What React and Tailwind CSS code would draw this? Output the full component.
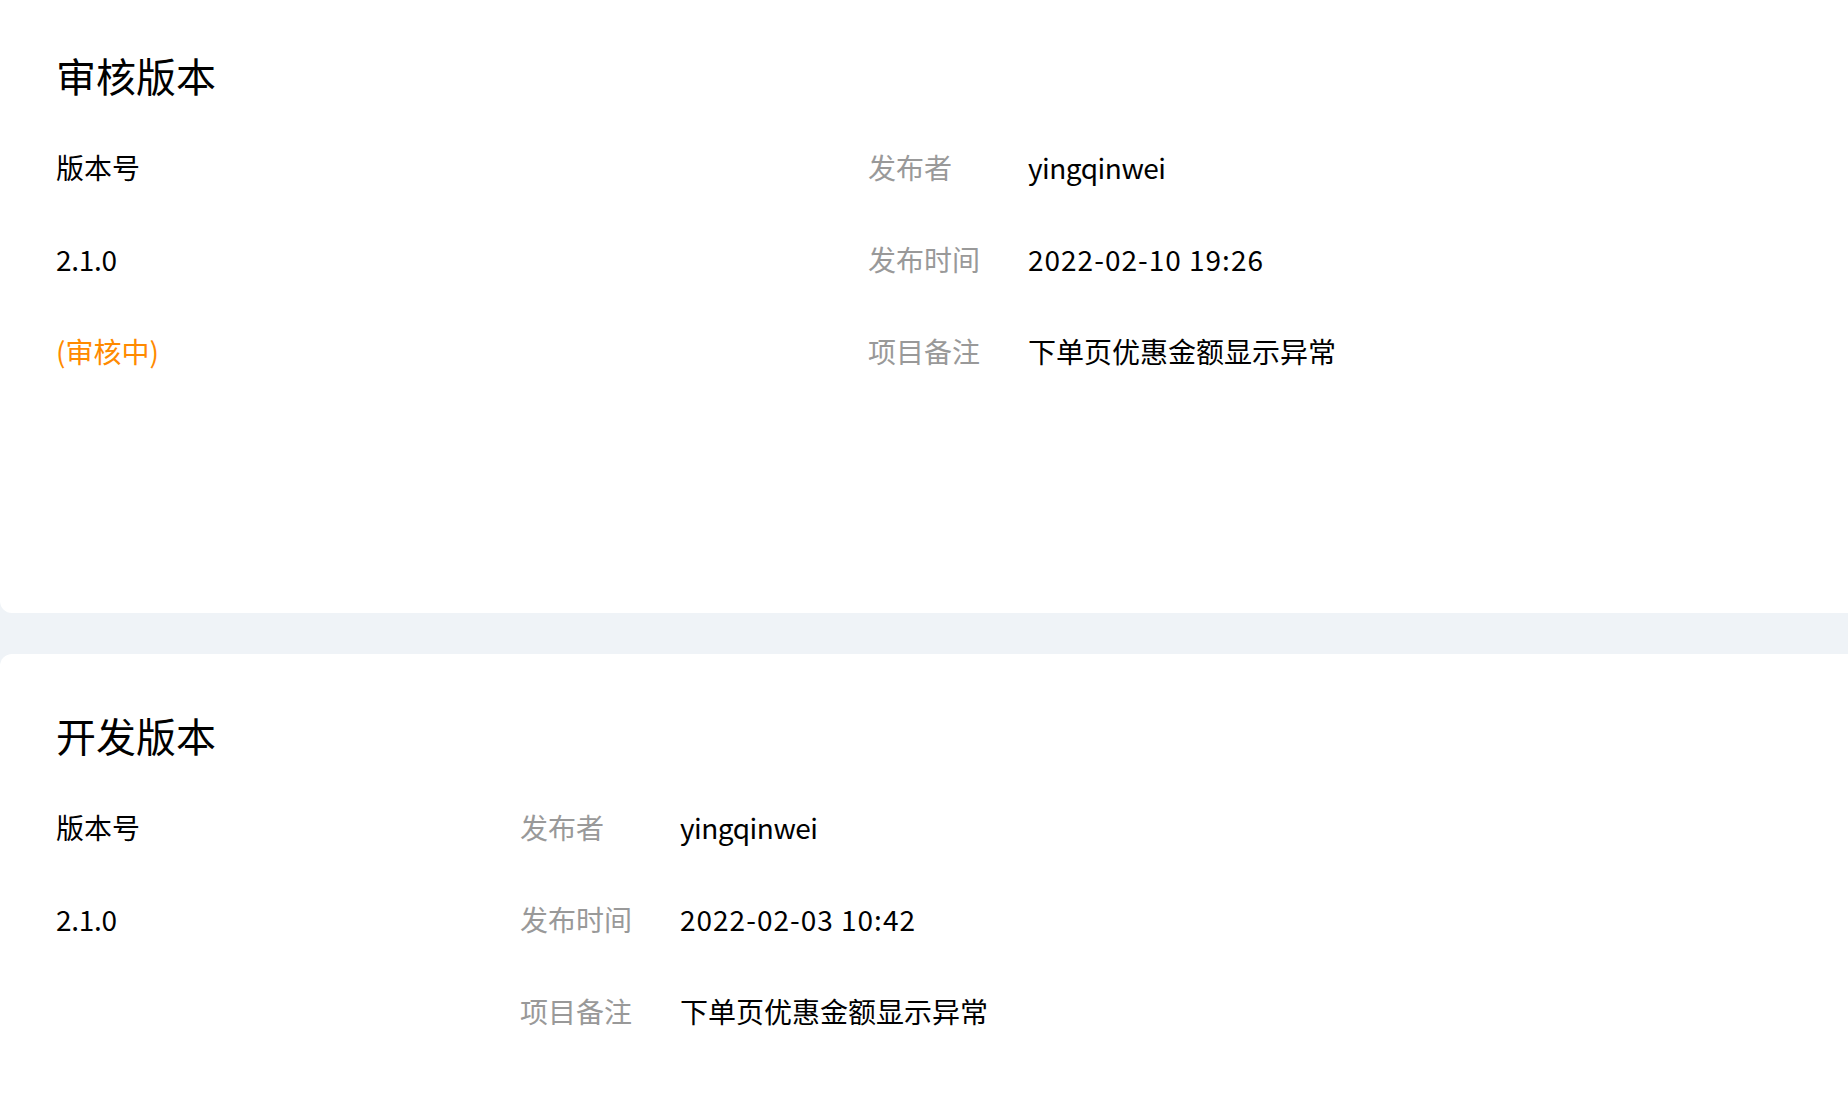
import React from 'react';

const FONT = { fontFamily: '"Noto Sans CJK SC", "Noto Sans", sans-serif' };

const reviewInfo = [
  { label: '发布者', value: 'yingqinwei', tight: true },
  { label: '发布时间', value: '2022-02-10 19:26', wide: true },
  { label: '项目备注', value: '下单页优惠金额显示异常' },
];

const devInfo = [
  { label: '发布者', value: 'yingqinwei', tight: true },
  { label: '发布时间', value: '2022-02-03 10:42', wide: true },
  { label: '项目备注', value: '下单页优惠金额显示异常' },
];

const Row = ({ children, className = '' }) => (
  <div className={`h-[92px] flex items-center text-[28px] leading-[40px] ${className}`}>{children}</div>
);

const VersionCard = ({ title, status, info, leftWidth, className }) => (
  <div className={`bg-white pl-[56px] ${className}`}>
    {/* Title */}
    <h2 className="h-[56px] text-[40px] leading-[56px] font-normal text-black">{title}</h2>

    <div className="mt-[18px] flex">
      {/* Version column */}
      <div className="shrink-0 text-black" style={{ width: leftWidth }}>
        <Row>版本号</Row>
        <Row className="tracking-[-0.3px]">2.1.0</Row>
        {status && <Row className="text-[#ff8a00]">{status}</Row>}
      </div>

      {/* Meta column */}
      <div className="flex-1">
        {info.map((item) => (
          <Row key={item.label}>
            <span className="w-[160px] shrink-0 text-[#999999]">{item.label}</span>
            <span
              className={`text-black ${item.wide ? 'tracking-[1px]' : ''} ${item.tight ? 'tracking-[-0.5px]' : ''}`}
            >
              {item.value}
            </span>
          </Row>
        ))}
      </div>
    </div>
  </div>
);

const App = () => {
  return (
    <div className="min-h-[1100px] w-full bg-[#eff3f7] overflow-hidden" style={FONT}>
      <VersionCard
        title="审核版本"
        status="(审核中)"
        info={reviewInfo}
        leftWidth={812}
        className="pt-[47px] pb-[216px] rounded-bl-[12px]"
      />
      <VersionCard
        title="开发版本"
        info={devInfo}
        leftWidth={464}
        className="mt-[41px] pt-[53px] pb-[120px] rounded-tl-[12px]"
      />
    </div>
  );
};

export default App;
